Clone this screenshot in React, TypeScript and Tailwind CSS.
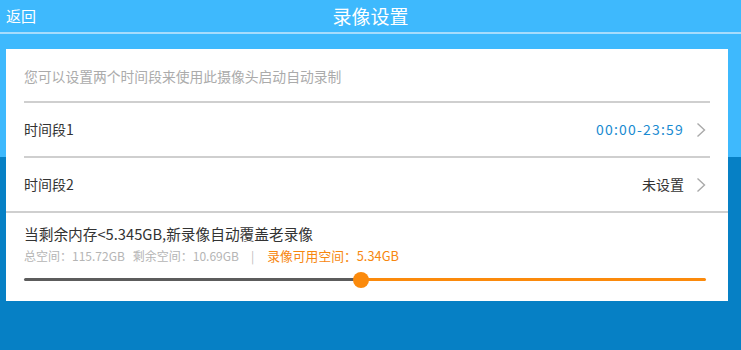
import React from "react";

const font = { fontFamily: '"Noto Sans CJK SC", "Noto Sans", sans-serif' };

function Chevron() {
  return (
    <svg width="10" height="16" viewBox="0 0 10 16" className="ml-[12px]">
      <path d="M1.5 1.5 L8.5 8 L1.5 14.5" fill="none" stroke="#a9a9a9" strokeWidth="1.4" />
    </svg>
  );
}

function Row({ label, value, valueClass }: { label: string; value: string; valueClass: string }) {
  return (
    <div className="flex h-[53px] items-center justify-between pr-[4px]">
      <span className="text-[14px] text-[#333]">{label}</span>
      <div className="flex items-center">
        <span className={`text-[14px] ${valueClass}`}>{value}</span>
        <Chevron />
      </div>
    </div>
  );
}

export default function App() {
  const pct = 49.4;
  return (
    <div className="relative h-[350px] w-[741px] overflow-hidden bg-[#0680c5]" style={font}>
      <div className="h-[157px] bg-[#3eb9fd]">
        <div className="relative flex h-[34px] items-center border-b-2 border-[#a6dcfc]">
          <span className="pl-[6px] text-[15px] text-white">返回</span>
          <span className="absolute left-1/2 -translate-x-1/2 text-[19px] text-white">录像设置</span>
        </div>
      </div>
      <div className="absolute left-[6px] top-[49px] h-[252px] w-[722px] bg-white">
        <div className="mx-[18px] flex h-[54px] items-center border-b-2 border-[#cfcfcf] pt-[2px]">
          <span className="text-[13.8px] text-[#ababab]">您可以设置两个时间段来使用此摄像头启动自动录制</span>
        </div>
        <div className="mx-[18px] border-b-2 border-[#cfcfcf]">
          <Row label="时间段1" value="00:00-23:59" valueClass="tracking-[1.2px] text-[#1a8bd1]" />
        </div>
        <div className="border-b-2 border-[#cfcfcf]">
          <div className="mx-[18px]">
            <Row label="时间段2" value="未设置" valueClass="text-[14.3px] text-[#333]" />
          </div>
        </div>
        <div className="px-[18px] pt-[11px]">
          <div className="text-[14.7px] leading-[20px] text-[#333]">当剩余内存&lt;5.345GB,新录像自动覆盖老录像</div>
          <div className="mt-[3px] flex items-center text-[12px] leading-[18px] text-[#b5b5b5]">
            <span>总空间：115.72GB</span>
            <span className="ml-[8px]">剩余空间：10.69GB</span>
            <span className="ml-[12px] mr-[13px] text-[#bdbdbd]">|</span>
            <span className="text-[12.8px] text-[#f7870f]">录像可用空间：5.34GB</span>
          </div>
          <div className="relative mr-[4px] mt-[7px] h-[16px]">
            <div className="absolute left-0 top-[6px] h-[3px] rounded-full bg-[#5c5c5c]" style={{ width: `${pct}%` }} />
            <div className="absolute right-0 top-[6px] h-[3px] rounded-full bg-[#fb8a0c]" style={{ width: `${100 - pct}%` }} />
            <div
              className="absolute top-0 h-[16px] w-[16px] -translate-x-1/2 rounded-full bg-[#fb8a0c]"
              style={{ left: `${pct}%` }}
            />
          </div>
        </div>
      </div>
    </div>
  );
}
